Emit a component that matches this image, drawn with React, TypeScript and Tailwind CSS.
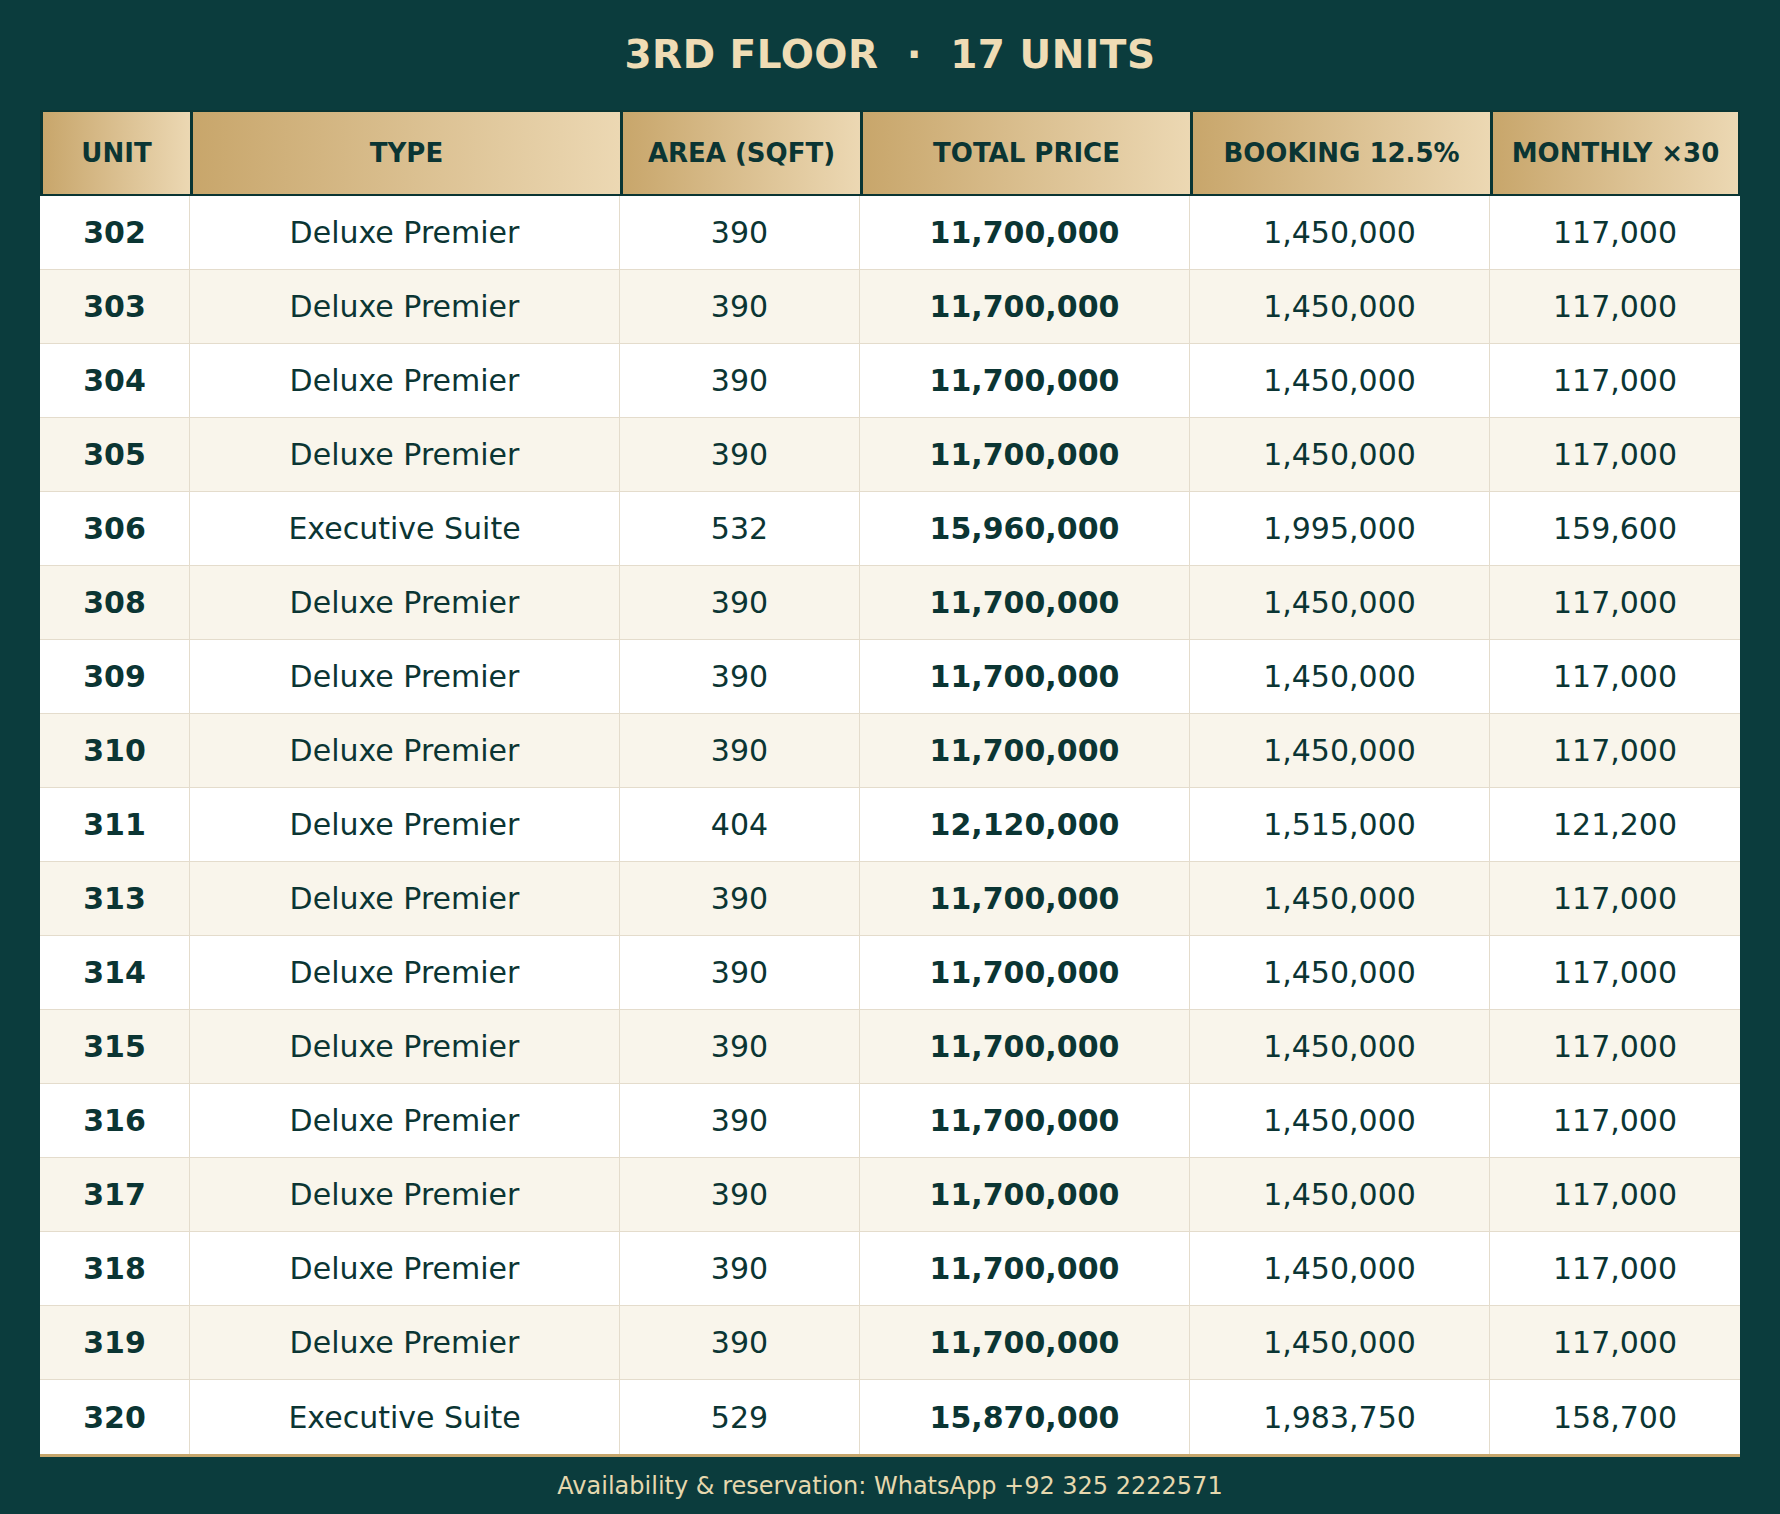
import React from "react";

const rows: [string, string, string, string, string, string][] = [
  ["302", "Deluxe Premier", "390", "11,700,000", "1,450,000", "117,000"],
  ["303", "Deluxe Premier", "390", "11,700,000", "1,450,000", "117,000"],
  ["304", "Deluxe Premier", "390", "11,700,000", "1,450,000", "117,000"],
  ["305", "Deluxe Premier", "390", "11,700,000", "1,450,000", "117,000"],
  ["306", "Executive Suite", "532", "15,960,000", "1,995,000", "159,600"],
  ["308", "Deluxe Premier", "390", "11,700,000", "1,450,000", "117,000"],
  ["309", "Deluxe Premier", "390", "11,700,000", "1,450,000", "117,000"],
  ["310", "Deluxe Premier", "390", "11,700,000", "1,450,000", "117,000"],
  ["311", "Deluxe Premier", "404", "12,120,000", "1,515,000", "121,200"],
  ["313", "Deluxe Premier", "390", "11,700,000", "1,450,000", "117,000"],
  ["314", "Deluxe Premier", "390", "11,700,000", "1,450,000", "117,000"],
  ["315", "Deluxe Premier", "390", "11,700,000", "1,450,000", "117,000"],
  ["316", "Deluxe Premier", "390", "11,700,000", "1,450,000", "117,000"],
  ["317", "Deluxe Premier", "390", "11,700,000", "1,450,000", "117,000"],
  ["318", "Deluxe Premier", "390", "11,700,000", "1,450,000", "117,000"],
  ["319", "Deluxe Premier", "390", "11,700,000", "1,450,000", "117,000"],
  ["320", "Executive Suite", "529", "15,870,000", "1,983,750", "158,700"],
];

const headers = ["UNIT", "TYPE", "AREA (SQFT)", "TOTAL PRICE", "BOOKING 12.5%", "MONTHLY ×30"];

export default function App() {
  return (
    <div
      className="w-[1780px] h-[1514px] bg-[#0b3c3d] px-10 flex flex-col"
      style={{ fontFamily: '"DejaVu Sans", sans-serif' }}
    >
      <div className="h-[110px] flex items-center justify-center pt-[1px]">
        <h1 className="text-[39px] font-bold text-[#efdcb5] tracking-[0.5px] whitespace-pre">
          3RD FLOOR  ·  17 UNITS
        </h1>
      </div>
      <div className="w-[1700px]">
        <div className="grid grid-cols-[150px_430px_240px_330px_300px_250px] h-[86px]">
          {headers.map((h, i) => (
            <div
              key={h}
              className={
                "flex items-center justify-center border-y-2 border-l-[3px] border-[#0a3533] bg-gradient-to-r from-[#c8a66b] to-[#ecd8b3] text-[26px] font-bold text-[#0b3533] whitespace-nowrap " +
                (i === 5 ? "border-r-2" : "") +
                (i === 0 ? " border-l-2" : "")
              }
            >
              {h}
            </div>
          ))}
        </div>
        <div className="border-b-[3px] border-[#c6a66c]">
          {rows.map((r, ri) => (
            <div
              key={r[0]}
              className={
                "grid grid-cols-[150px_430px_240px_330px_300px_250px] h-[74px] text-[30px] text-[#0b3533] " +
                (ri % 2 === 1 ? "bg-[#f9f5eb] " : "bg-white ") +
                (ri === rows.length - 1 ? "h-[72px]" : "border-b border-[#e4dccc]")
              }
            >
              {r.map((c, ci) => (
                <div
                  key={ci}
                  className={
                    "flex items-center justify-center " +
                    (ci < 5 ? "border-r border-[#e4dccc] " : "") +
                    (ci === 0 || ci === 3 ? "font-bold" : "")
                  }
                >
                  {c}
                </div>
              ))}
            </div>
          ))}
        </div>
      </div>
      <div className="flex-1 flex items-center justify-center">
        <p className="text-[24px] text-[#e6d8ae]">
          Availability &amp; reservation: WhatsApp +92 325 2222571
        </p>
      </div>
    </div>
  );
}
